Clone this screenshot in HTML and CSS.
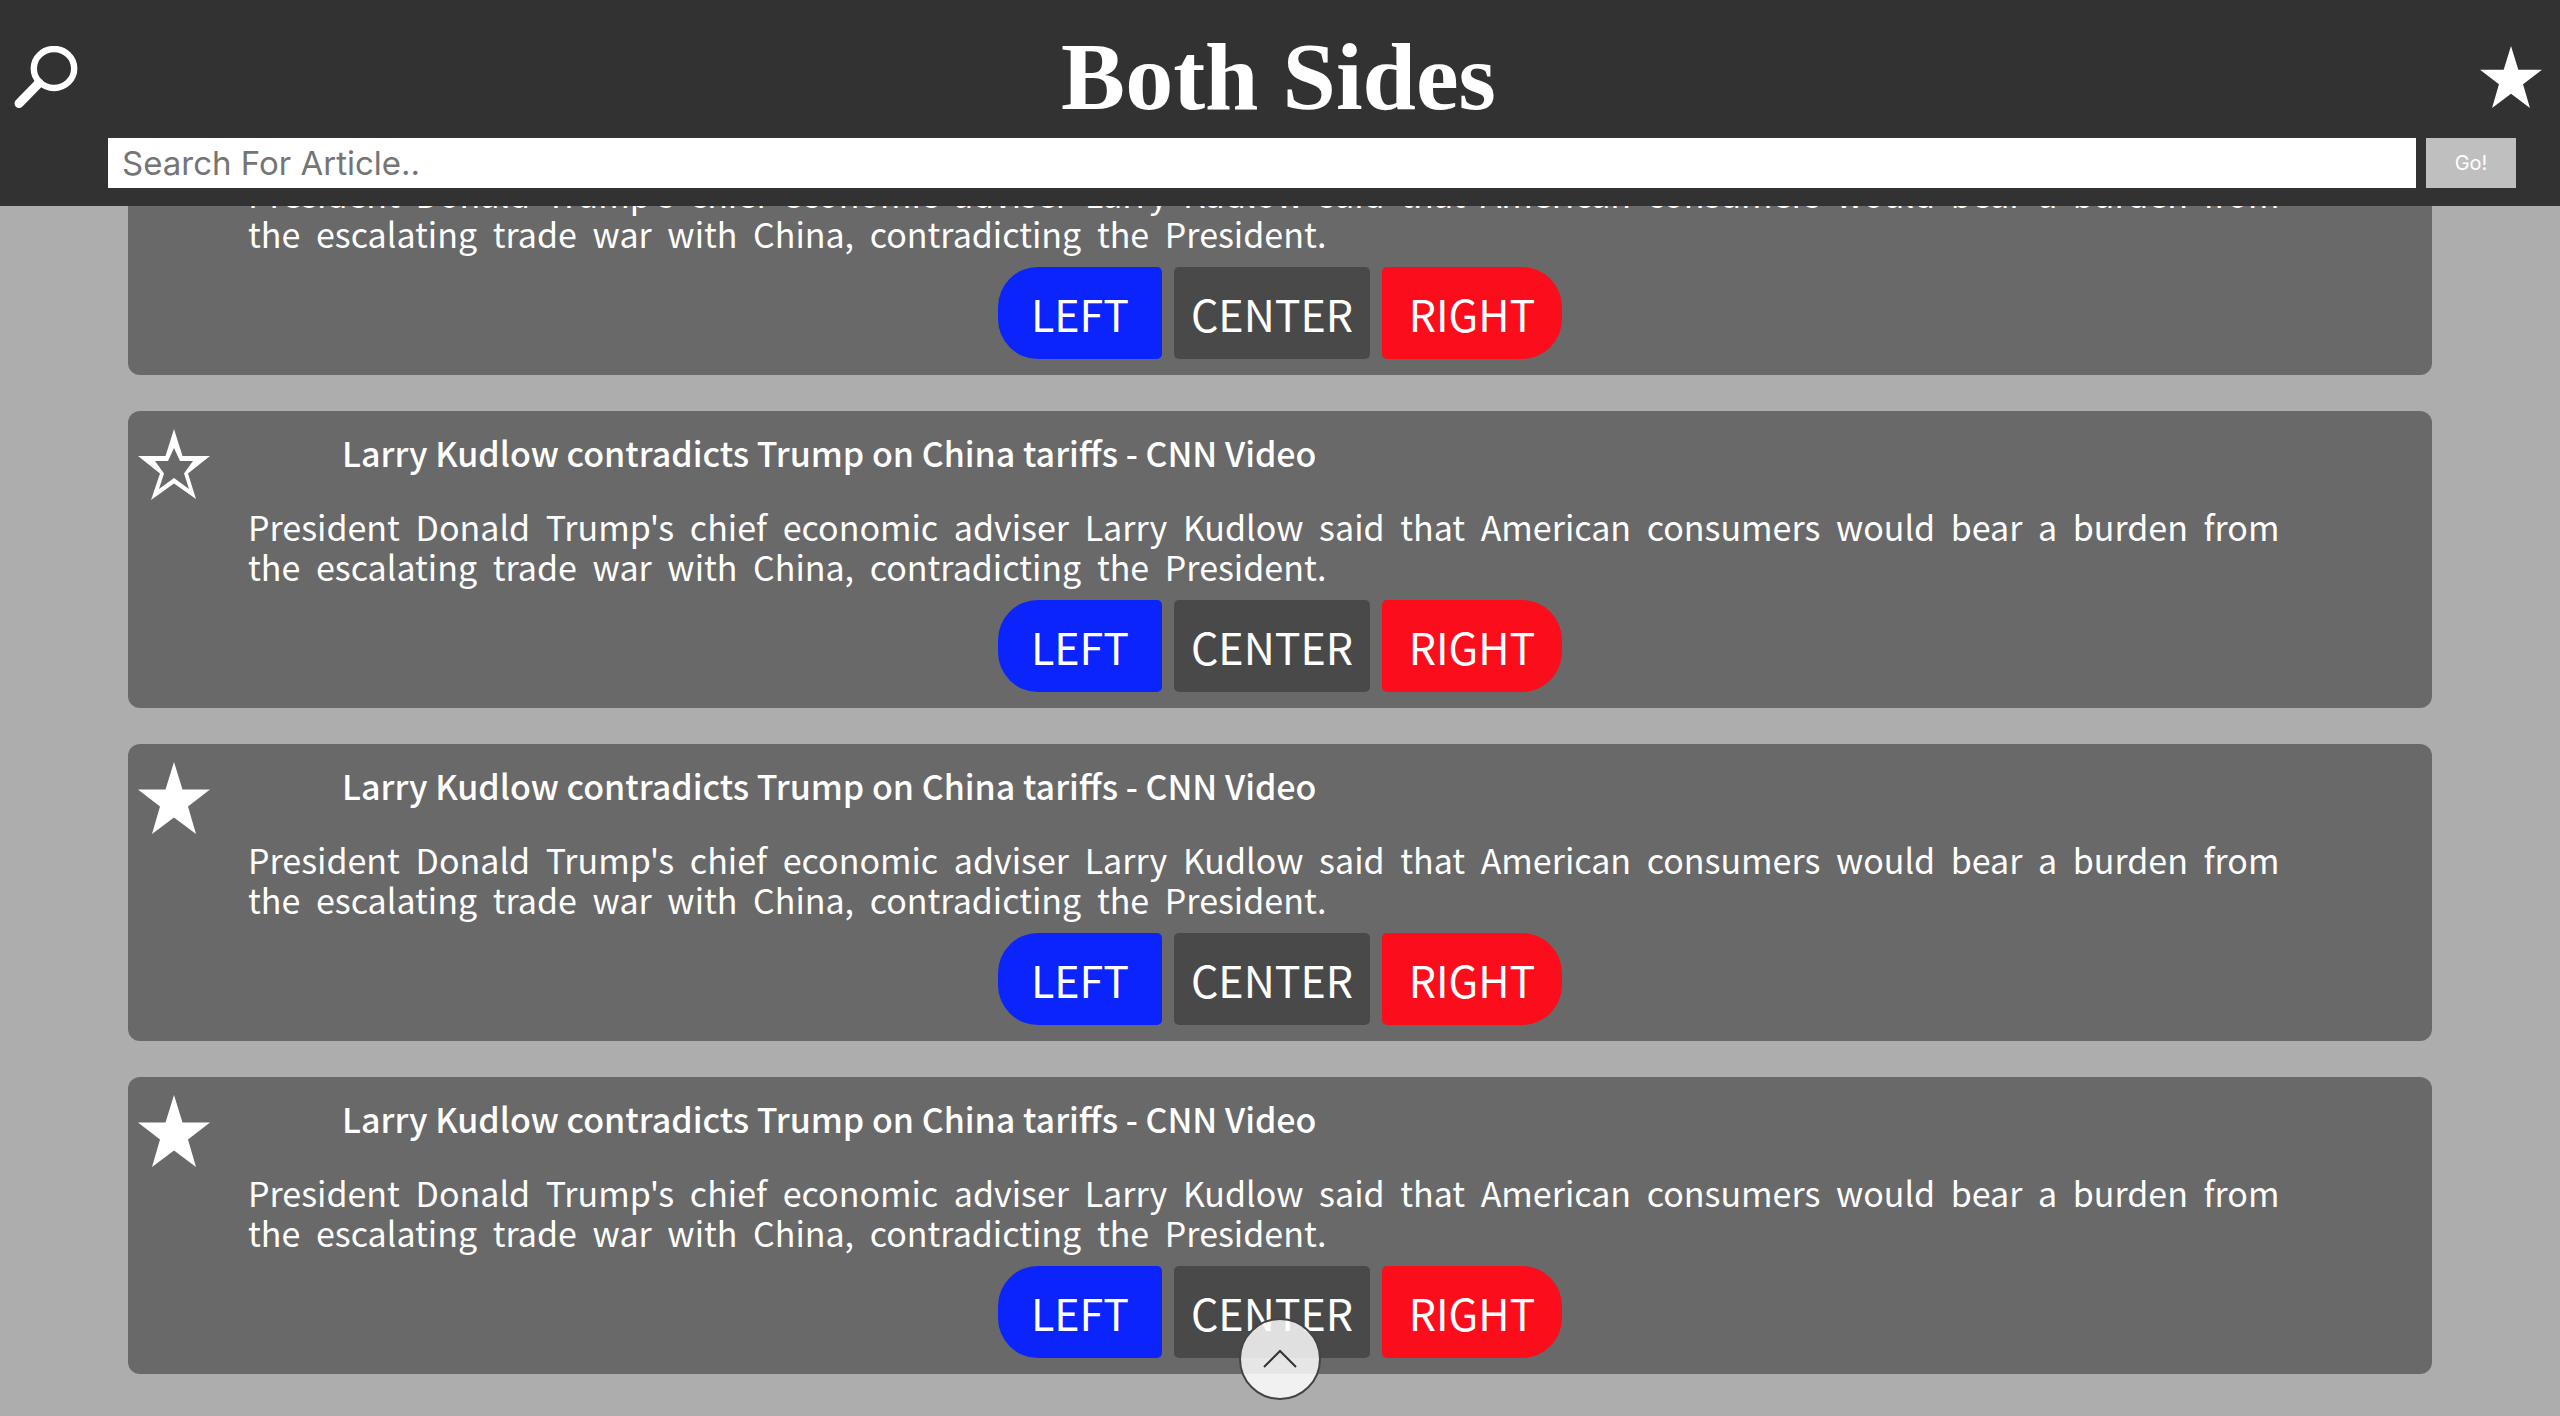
FILE: index.html
```html
<!DOCTYPE html>
<html lang="en">
<head>
<meta charset="utf-8">
<title>Both Sides</title>
<link rel="stylesheet" href="styles.css">
</head>
<body>
<svg class="sprite" aria-hidden="true">
  <symbol id="star" viewBox="0 0 72 72"><path d="M36 0l8.500 27.500H72L50 44.500 58 72 36 55.500 14 72l8-27.500L0 27.500h27.500z"/></symbol>
  <symbol id="star-outline" viewBox="0 0 72 72"><path fill-rule="evenodd" d="M36 0l8.500 27H72L50 44.500 58 70 36 54.500 13 71l9-26.500L0 27h27.500zM36 19l-6 13H17l9 12.500L21 60l15-11 15 11-5-15.500L55 32H42z"/></symbol>
</svg>

<header class="header">
  <div class="topbar">
    <button class="icon-button" type="button" aria-label="Search">
      <svg class="icon" viewBox="0 0 64 62"><ellipse cx="40" cy="22.500" rx="20.200" ry="19.500" fill="none" stroke="#fff" stroke-width="6.400"/><path d="M25 37L5 57.500" stroke="#fff" stroke-width="9" stroke-linecap="round"/></svg>
    </button>
    <h1 class="logo">Both Sides</h1>
    <button class="icon-button" type="button" aria-label="Favorites">
      <svg class="icon"><use href="#star"/></svg>
    </button>
  </div>
  <form class="search">
    <input class="search-input" type="text" placeholder="Search For Article.." aria-label="Search for article">
    <button class="search-go" type="button">Go!</button>
  </form>
</header>

<main class="feed">
  <article class="card">
    <p class="card-text">President Donald Trump's chief economic adviser Larry Kudlow said that American consumers would bear a burden from the escalating trade war with China, contradicting the President.</p>
    <div class="sides">
      <button class="side left" type="button">LEFT</button>
      <button class="side center" type="button">CENTER</button>
      <button class="side right" type="button">RIGHT</button>
    </div>
  </article>
  <article class="card">
    <div class="card-head">
      <button class="card-star" type="button" aria-label="Save article"><svg class="star"><use href="#star-outline"/></svg></button>
      <h2 class="card-title">Larry Kudlow contradicts Trump on China tariffs - CNN Video</h2>
    </div>
    <p class="card-text">President Donald Trump's chief economic adviser Larry Kudlow said that American consumers would bear a burden from the escalating trade war with China, contradicting the President.</p>
    <div class="sides">
      <button class="side left" type="button">LEFT</button>
      <button class="side center" type="button">CENTER</button>
      <button class="side right" type="button">RIGHT</button>
    </div>
  </article>
  <article class="card">
    <div class="card-head">
      <button class="card-star" type="button" aria-label="Remove saved article"><svg class="star"><use href="#star"/></svg></button>
      <h2 class="card-title">Larry Kudlow contradicts Trump on China tariffs - CNN Video</h2>
    </div>
    <p class="card-text">President Donald Trump's chief economic adviser Larry Kudlow said that American consumers would bear a burden from the escalating trade war with China, contradicting the President.</p>
    <div class="sides">
      <button class="side left" type="button">LEFT</button>
      <button class="side center" type="button">CENTER</button>
      <button class="side right" type="button">RIGHT</button>
    </div>
  </article>
  <article class="card">
    <div class="card-head">
      <button class="card-star" type="button" aria-label="Remove saved article"><svg class="star"><use href="#star"/></svg></button>
      <h2 class="card-title">Larry Kudlow contradicts Trump on China tariffs - CNN Video</h2>
    </div>
    <p class="card-text">President Donald Trump's chief economic adviser Larry Kudlow said that American consumers would bear a burden from the escalating trade war with China, contradicting the President.</p>
    <div class="sides">
      <button class="side left" type="button">LEFT</button>
      <button class="side center" type="button">CENTER</button>
      <button class="side right" type="button">RIGHT</button>
    </div>
  </article>
</main>

<button class="to-top" type="button" aria-label="Back to top">
  <svg class="chevron" viewBox="0 0 34 20"><path d="M1 18L17 2l16 16" fill="none" stroke="#333" stroke-width="2"/></svg>
</button>
</body>
</html>
```
FILE: styles.css
```css
* { box-sizing: border-box; }

body {
  margin: 0;
  background: #adadad;
  color: #fff;
  font-family: "Noto Sans CJK KR", "Noto Sans", sans-serif;
}

button {
  margin: 0;
  padding: 0;
  border: 0;
  background: none;
  color: inherit;
  font-family: inherit;
  cursor: pointer;
}

svg { display: block; fill: #fff; }
.sprite { position: absolute; width: 0; height: 0; }

/* Fixed header */
.header {
  position: fixed;
  top: 0;
  left: 0;
  right: 0;
  z-index: 2;
  padding: 16px 0 18px;
  background: #323232;
}

.topbar {
  display: flex;
  align-items: center;
  justify-content: space-between;
  height: 122px;
  padding: 0 17px 0 14px;
}

.icon { width: 64px; height: 62px; }

.logo {
  margin: 0;
  font-family: "Old English Text MT", "Liberation Serif", serif;
  font-size: 96px;
  line-height: 120px;
  font-weight: 700;
}

.search {
  display: flex;
  gap: 10px;
  height: 50px;
  padding: 0 44px 0 108px;
}

.search-input {
  flex: 1;
  min-width: 0;
  padding: 0 14px;
  border: 0;
  border-radius: 0;
  background: #fff;
  color: #323232;
  font-family: Inter, sans-serif;
  font-size: 33px;
}
.search-input::placeholder { color: #757575; opacity: 1; }

.search-go {
  width: 90px;
  background: #bfbfbf;
  font-family: Inter, sans-serif;
  font-size: 20px;
}

/* Article cards; the list starts part-way under the header */
.feed {
  display: flex;
  flex-direction: column;
  gap: 36px;
  padding: 156px 5% 42px;
}

.card {
  padding: 18px 0 16px;
  border-radius: 12px;
  background: #696969;
}

.card-head {
  display: flex;
  gap: 132px;
  height: 78px;
  padding-left: 10px;
}

.star { width: 72px; height: 72px; }

.card-title {
  margin: 0;
  font-size: 34px;
  line-height: 48px;
  font-weight: 500;
}

.card-text {
  margin: 0 0 13px;
  padding: 0 120px;
  font-size: 34px;
  line-height: 40px;
  word-spacing: 8px;
}

.card-star { align-self: flex-start; }

.sides {
  display: flex;
  justify-content: center;
  gap: 12px;
}

.side {
  height: 92px;
  border-radius: 5px;
  font-size: 43px;
}
.left { width: 164px; border-radius: 40px 5px 5px 40px; background: #0b24fb; }
.center { width: 196px; background: #494949; }
.right { width: 180px; border-radius: 5px 40px 40px 5px; background: #fc0d1b; }

/* Back-to-top control */
.to-top {
  position: fixed;
  left: 50%;
  bottom: 16px;
  z-index: 3;
  display: grid;
  place-items: center;
  width: 82px;
  height: 82px;
  margin-left: -41px;
  border: 2px solid #444;
  border-radius: 50%;
  background: rgba(255, 255, 255, 0.83);
}
.chevron { width: 34px; height: 20px; }
```
